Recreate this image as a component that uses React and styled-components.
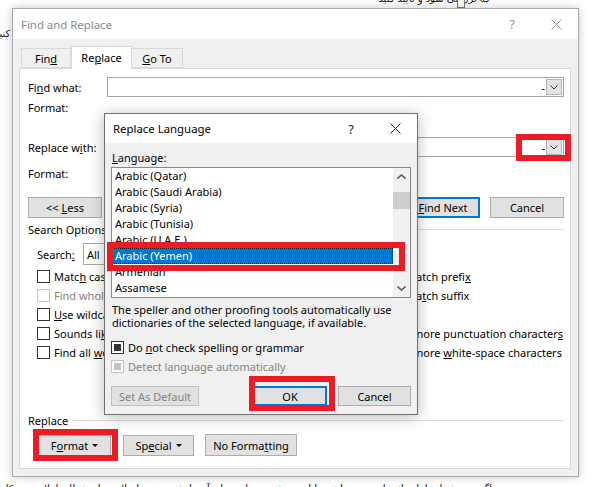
import React from 'react'
import styled, { createGlobalStyle } from 'styled-components'

const UI_FONT = `"Noto Sans", "Open Sans", sans-serif`

const GlobalStyle = createGlobalStyle`
  html, body {
    margin: 0;
    padding: 0;
    background: #fff;
  }
  body {
    font-family: ${UI_FONT};
    font-size: 11px;
    color: #000;
  }
`

const Page = styled.div`
  position: relative;
  width: 590px;
  height: 487px;
  overflow: hidden;
  background: #fff;
`

/* document text behind the dialogs */
const Doc = styled.div`
  display: flex;
  flex-direction: column;
  font-family: "DejaVu Sans", sans-serif;
  font-size: 10px;
  color: #111;
`
const DocLine = styled.div`
  direction: rtl;
  white-space: nowrap;
  overflow: hidden;
  width: ${p => p.$w}px;
  height: 16px;
  line-height: 16px;
  margin-top: ${p => p.$mt || 0}px;
`
const Handle = styled.span`
  position: absolute;
  left: 457px;
  top: -1px;
  width: 6px;
  height: 7px;
  border: 1px solid #7a7a7a;
  background: #fff;
`

/* windows */
const Window = styled.div`
  position: absolute;
  left: ${p => p.$x}px;
  top: ${p => p.$y}px;
  width: ${p => p.$w}px;
  height: ${p => p.$h}px;
  box-sizing: border-box;
  border: 1px solid ${p => (p.$active ? '#6f6f6f' : '#a9a9a9')};
  background: #f0f0f0;
  box-shadow: ${p => (p.$active ? '0 2px 14px rgba(0,0,0,0.28)' : '0 0 9px rgba(0,0,0,0.22)')};
  display: flex;
  flex-direction: column;
`
const TitleBar = styled.div`
  height: ${p => p.$h}px;
  flex: none;
  background: #fff;
  display: flex;
  align-items: center;
  padding-left: 8px;
  color: ${p => (p.$active ? '#000' : '#8a8a8a')};
`
const TitleText = styled.div`
  flex: 1;
  font-size: 11.4px;
`
const CaptionBtn = styled.div`
  width: 44px;
  height: 100%;
  display: flex;
  align-items: center;
  justify-content: center;
  font-size: 13px;
  color: ${p => (p.$active ? '#222' : '#999')};
`

const CloseGlyph = ({ color }) => (
  <svg width="11" height="11" viewBox="0 0 11 11">
    <path d="M0.5 0.5 L10.5 10.5 M10.5 0.5 L0.5 10.5" stroke={color} strokeWidth="1" fill="none" />
  </svg>
)

/* find and replace body */
const MainBody = styled.div`
  flex: 1;
  display: flex;
  flex-direction: column;
  padding: 7px 7px 7px 6px;
`
const TabStrip = styled.div`
  display: flex;
  align-items: flex-end;
  height: 22px;
  padding-left: 2px;
`
const Tab = styled.div`
  position: relative;
  box-sizing: border-box;
  width: ${p => p.$w}px;
  height: ${p => (p.$active ? 23 : 20)}px;
  margin-bottom: ${p => (p.$active ? -1 : 0)}px;
  border: 1px solid #d9d9d9;
  border-bottom: ${p => (p.$active ? 'none' : '1px solid #d9d9d9')};
  margin-left: ${p => (p.$active ? 0 : -1)}px;
  background: ${p => (p.$active ? '#fff' : '#f0f0f0')};
  z-index: ${p => (p.$active ? 1 : 0)};
  display: flex;
  align-items: center;
  justify-content: center;
  padding-bottom: ${p => (p.$active ? 2 : 0)}px;
  &:first-child { margin-left: 0; }
`
const Panel = styled.div`
  flex: 1;
  background: #fff;
  border: 1px solid #d9d9d9;
  padding: 8px 6px 0 8px;
  display: flex;
  flex-direction: column;
`
const FieldRow = styled.div`
  display: flex;
  align-items: center;
  height: 20px;
  margin-top: ${p => p.$mt || 0}px;
`
const FieldLabel = styled.div`
  width: 79px;
  flex: none;
`
const Combo = styled.div`
  position: relative;
  flex: 1;
  height: 20px;
  box-sizing: border-box;
  border: 1px solid #a6a6a6;
  background: #fff;
  display: flex;
  align-items: center;
  justify-content: flex-end;
`
const Dash = styled.span`
  margin-right: 1px;
  font-size: 11px;
`
const DropBtn = styled.div`
  width: 16px;
  height: 16px;
  margin-right: 1px;
  box-sizing: border-box;
  border: 1px solid #b4b4b4;
  background: #e3e3e3;
  display: flex;
  align-items: center;
  justify-content: center;
`
const Chevron = ({ up, color = '#333', w = 8, weight = 1 }) => (
  <svg width={w} height="5" viewBox={`0 0 ${w} 5`}>
    <path
      d={up ? `M0.5 4.5 L${w / 2} 1 L${w - 0.5} 4.5` : `M0.5 0.5 L${w / 2} 4 L${w - 0.5} 0.5`}
      stroke={color}
      strokeWidth={weight}
      fill="none"
    />
  </svg>
)

const ButtonRow = styled.div`
  display: flex;
  align-items: center;
  margin-top: ${p => p.$mt || 0}px;
  padding-left: ${p => p.$pl || 0}px;
  gap: ${p => p.$gap || 0}px;
`
const Push = styled.div`
  flex: 1;
`
const Button = styled.div`
  position: relative;
  box-sizing: border-box;
  width: ${p => p.$w}px;
  height: ${p => p.$h || 21}px;
  flex: none;
  background: #e1e1e1;
  border: ${p => (p.$default ? '2px solid #0078d7' : `1px solid ${p.$disabled ? '#bfbfbf' : '#adadad'}`)};
  color: ${p => (p.$disabled ? '#838383' : '#000')};
  display: flex;
  align-items: center;
  justify-content: center;
  white-space: nowrap;
  margin-left: ${p => p.$ml || 0}px;
`
const Caret = styled.span`
  width: 0;
  height: 0;
  margin-left: 4px;
  border-left: 3px solid transparent;
  border-right: 3px solid transparent;
  border-top: 3px solid #000;
`
const GroupHead = styled.div`
  display: flex;
  align-items: center;
  height: 14px;
  margin-top: ${p => p.$mt || 0}px;
  &::after {
    content: '';
    flex: 1;
    height: 1px;
    background: #dcdcdc;
    margin-left: 4px;
  }
`
const SearchRow = styled.div`
  display: flex;
  align-items: center;
  height: 22px;
  margin: 7px 0 0 9px;
`
const SearchLabel = styled.div`
  width: 46px;
`
const Select = styled.div`
  width: 108px;
  height: 22px;
  box-sizing: border-box;
  border: 1px solid #a6a6a6;
  padding-left: 3px;
  display: flex;
  align-items: center;
`
const OptionsGrid = styled.div`
  display: grid;
  grid-template-columns: 352px 1fr;
  grid-auto-rows: 19px;
  margin: 2px 0 0 9px;
`
const Option = styled.div`
  display: flex;
  align-items: center;
  gap: 4px;
  height: ${p => p.$h || 19}px;
  margin-top: ${p => p.$mt || 0}px;
  white-space: nowrap;
  color: ${p => (p.$disabled ? '#838383' : '#000')};
`
const Box = styled.span`
  width: 13px;
  height: 13px;
  flex: none;
  box-sizing: border-box;
  border: 1px solid ${p => (p.$disabled ? '#c4c4c4' : '#333')};
  background: #fff;
  display: flex;
  align-items: center;
  justify-content: center;
  &::after {
    content: '';
    display: ${p => (p.$filled ? 'block' : 'none')};
    width: 7px;
    height: 7px;
    background: ${p => (p.$disabled ? '#c4c4c4' : '#333')};
  }
`

/* red callouts drawn over the controls */
const Mark = styled.span`
  position: absolute;
  left: ${p => p.$l}px;
  right: ${p => p.$r}px;
  top: ${p => p.$t}px;
  bottom: ${p => p.$b}px;
  border: 6px solid #ed1c24;
  pointer-events: none;
  z-index: 2;
`

/* replace language body */
const LangBody = styled.div`
  flex: 1;
  display: flex;
  flex-direction: column;
  padding: 8px 6px 0 6px;
`
const LangLabel = styled.div`
  height: 14px;
  line-height: 14px;
  padding-left: 1px;
`
const ListBox = styled.div`
  margin-top: 2px;
  height: 131px;
  box-sizing: border-box;
  border: 1px solid #828790;
  background: #fff;
  display: flex;
`
const Items = styled.div`
  flex: 1;
  display: flex;
  flex-direction: column;
`
const Item = styled.div`
  position: relative;
  height: 16px;
  line-height: 16px;
  padding-left: 3px;
  white-space: nowrap;
  background: ${p => (p.$selected ? '#0078d7' : 'transparent')};
  color: ${p => (p.$selected ? '#fff' : '#000')};
  outline: ${p => (p.$selected ? '1px dotted #1a1a1a' : 'none')};
  outline-offset: -1px;
`
const ScrollBar = styled.div`
  width: 17px;
  flex: none;
  background: #f0f0f0;
  display: flex;
  flex-direction: column;
`
const ScrollArrow = styled.div`
  height: 17px;
  display: flex;
  align-items: center;
  justify-content: center;
`
const Track = styled.div`
  flex: 1;
`
const Thumb = styled.div`
  margin-top: 7px;
  height: 17px;
  background: #cdcdcd;
`
const Note = styled.div`
  margin-top: 5px;
  line-height: 13px;
  padding-left: 1px;
  white-space: nowrap;
`

const langs = [
  'Arabic (Qatar)',
  'Arabic (Saudi Arabia)',
  'Arabic (Syria)',
  'Arabic (Tunisia)',
  'Arabic (U.A.E.)',
  'Arabic (Yemen)',
  'Armenian',
  'Assamese',
]

const FindReplace = () => (
  <Window $x={12} $y={8} $w={567} $h={469}>
    <TitleBar $h={30}>
      <TitleText>Find and Replace</TitleText>
      <CaptionBtn>?</CaptionBtn>
      <CaptionBtn><CloseGlyph color="#9a9a9a" /></CaptionBtn>
    </TitleBar>
    <MainBody>
      <TabStrip>
        <Tab $w={50}><span>Fin<u>d</u></span></Tab>
        <Tab $w={61} $active><span>Re<u>p</u>lace</span></Tab>
        <Tab $w={52}><span><u>G</u>o To</span></Tab>
      </TabStrip>
      <Panel>
        <FieldRow>
          <FieldLabel>Fi<u>n</u>d what:</FieldLabel>
          <Combo>
            <Dash>-</Dash>
            <DropBtn><Chevron /></DropBtn>
          </Combo>
        </FieldRow>
        <FieldRow>
          <FieldLabel>Format:</FieldLabel>
        </FieldRow>
        <FieldRow $mt={20}>
          <FieldLabel>Replace w<u>i</u>th:</FieldLabel>
          <Combo>
            <Dash>-</Dash>
            <DropBtn><Chevron /></DropBtn>
            <Mark $l={408} $r={-8} $t={-4} $b={-5} />
          </Combo>
        </FieldRow>
        <FieldRow $mt={6}>
          <FieldLabel>Format:</FieldLabel>
        </FieldRow>
        <ButtonRow $mt={14} $gap={10}>
          <Button $w={74}><span>&lt;&lt; <u>L</u>ess</span></Button>
          <Push />
          <Button $w={74}><span><u>R</u>eplace</span></Button>
          <Button $w={74}><span>Replace <u>A</u>ll</span></Button>
          <Button $w={74} $default><span><u>F</u>ind Next</span></Button>
          <Button $w={74}>Cancel</Button>
        </ButtonRow>
        <GroupHead $mt={4}>Search Options</GroupHead>
        <SearchRow>
          <SearchLabel>Search<u>:</u></SearchLabel>
          <Select>All</Select>
        </SearchRow>
        <OptionsGrid>
          <Option><Box /><span>Matc<u>h</u> case</span></Option>
          <Option><Box /><span>Match prefi<u>x</u></span></Option>
          <Option $disabled><Box $disabled /><span>Find whole words onl<u>y</u></span></Option>
          <Option><Box /><span>Ma<u>t</u>ch suffix</span></Option>
          <Option><Box /><span><u>U</u>se wildcards</span></Option>
          <div />
          <Option><Box /><span>Sounds li<u>k</u>e (English)</span></Option>
          <Option><Box /><span>Ignore punctuation character<u>s</u></span></Option>
          <Option><Box /><span>Find all <u>w</u>ord forms (English)</span></Option>
          <Option><Box /><span>Ignore <u>w</u>hite-space characters</span></Option>
        </OptionsGrid>
        <GroupHead $mt={51}>Replace</GroupHead>
        <ButtonRow $mt={7} $pl={10}>
          <Button $w={73}>
            <span>F<u>o</u>rmat</span>
            <Caret />
            <Mark $l={-6} $r={-8} $t={-7} $b={-6} />
          </Button>
          <Button $w={71} $ml={12}><span>Sp<u>e</u>cial</span><Caret /></Button>
          <Button $w={92} $h={22} $ml={11}><span>No Forma<u>t</u>ting</span></Button>
        </ButtonRow>
      </Panel>
    </MainBody>
  </Window>
)

const ReplaceLanguage = () => (
  <Window $x={104} $y={113} $w={314} $h={302} $active>
    <TitleBar $h={29} $active>
      <TitleText>Replace Language</TitleText>
      <CaptionBtn $active>?</CaptionBtn>
      <CaptionBtn $active><CloseGlyph color="#222" /></CaptionBtn>
    </TitleBar>
    <LangBody>
      <LangLabel><u>L</u>anguage:</LangLabel>
      <ListBox>
        <Items>
          {langs.map(name => (
            <Item key={name} $selected={name === 'Arabic (Yemen)'}>
              {name}
              {name === 'Arabic (Yemen)' && <Mark $l={-5} $r={-12} $t={-6} $b={-7} />}
            </Item>
          ))}
        </Items>
        <ScrollBar>
          <ScrollArrow><Chevron up color="#606060" w={9} weight={1.6} /></ScrollArrow>
          <Track><Thumb /></Track>
          <ScrollArrow><Chevron color="#606060" w={9} weight={1.6} /></ScrollArrow>
        </ScrollBar>
      </ListBox>
      <Note>
        The speller and other proofing tools automatically use<br />
        dictionaries of the selected language, if available.
      </Note>
      <Option $h={20} $mt={8}><Box $filled /><span>Do <u>n</u>ot check spelling or grammar</span></Option>
      <Option $disabled><Box $disabled $filled /><span>Detect language automatically</span></Option>
      <ButtonRow $mt={10}>
        <Button $w={88} $h={20} $disabled>Set As Default</Button>
        <Push />
        <Button $w={74} $h={20} $default>
          OK
          <Mark $l={-6} $r={-10} $t={-12} $b={-7} />
        </Button>
        <Button $w={73} $h={20} $ml={11}>Cancel</Button>
      </ButtonRow>
    </LangBody>
  </Window>
)

export default function App() {
  return (
    <Page>
      <GlobalStyle />
      <Doc>
        <DocLine $w={490} $mt={-9}>که بررسی شود و تایید کنید</DocLine>
        <DocLine $w={560} $mt={19}>
          زبان متن انتخاب شده را مشخص کنید تا ابزارهای بررسی املا و دستور زبان به درستی کار کنند و نتیجه بهتری داشته باشند لطفا دقت کنید
        </DocLine>
        <DocLine $w={560} $mt={77}>
          در پنجره جستجو و جایگزینی می‌توانید قالب متن را تغییر دهید و زبان را برای متن جایگزین انتخاب کنید تا بررسی املا انجام نشود
        </DocLine>
        <DocLine $w={492} $mt={346}>
          اگر متن شما شامل واژه‌های عربی باشد، با این روش می‌توانید زبان آن را تغییر دهید تا علامت‌های خطای املایی زیر کلمات نمایش داده نشوند و کار ویرایش ساده‌تر شود
        </DocLine>
      </Doc>
      <Handle />
      <FindReplace />
      <ReplaceLanguage />
    </Page>
  )
}
